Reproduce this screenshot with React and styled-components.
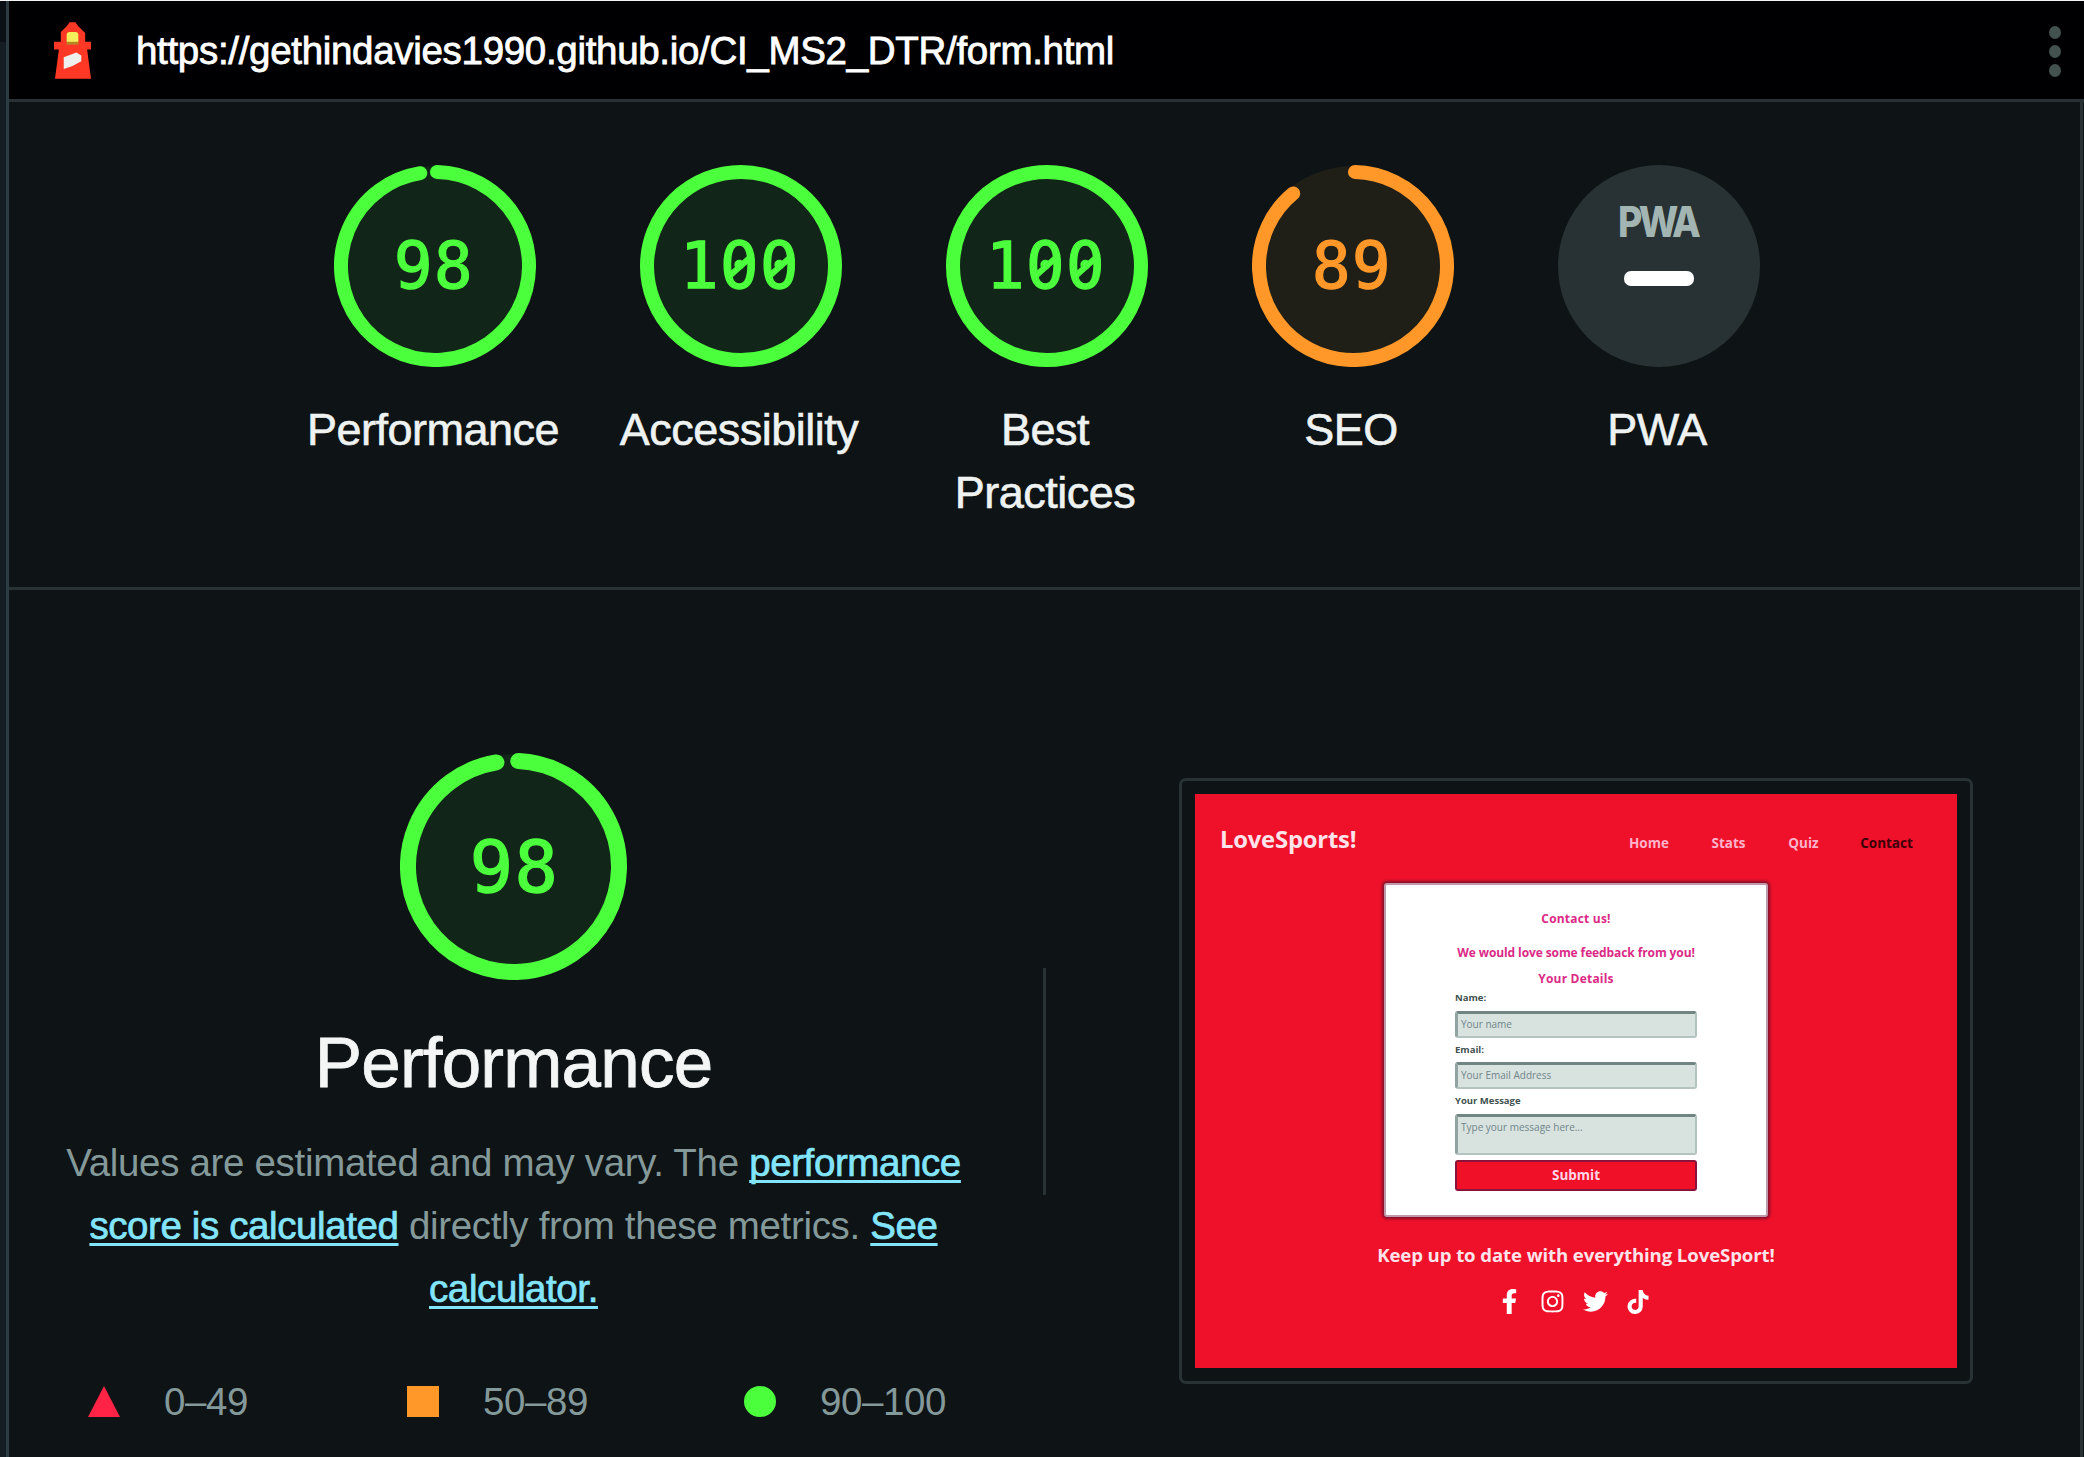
import React from 'react';
import styled, { createGlobalStyle } from 'styled-components';
import { FaFacebookF, FaInstagram, FaTwitter, FaTiktok } from 'react-icons/fa';

const GREEN = '#4cff3d';
const ORANGE = '#ff9829';
const RED = '#ff2345';
const LINE = '#283234';

const GlobalStyle = createGlobalStyle`
  * { box-sizing: border-box; }
  body {
    margin: 0;
    background: #0e1315;
    font-family: "Liberation Sans", Arial, sans-serif;
    overflow: hidden;
  }
`;

const Page = styled.div`
  display: flex;
  width: 2084px;
  height: 1457px;
  border-top: 1px solid #f4f6f6;
  background: #0e1315;
`;

const Gutter = styled.div`
  width: 9px;
  flex: none;
  border-right: 3px solid #2d3b43;
  background: linear-gradient(#0b0f16 41px, #141c24 41px);
`;

const Report = styled.main`
  flex: 1;
  display: flex;
  flex-direction: column;
  min-width: 0;
`;

const TopBar = styled.header`
  display: flex;
  align-items: center;
  height: 101px;
  flex: none;
  padding: 2px 23px 0 45px;
  border-bottom: 3px solid ${LINE};
  background: #000002;
`;

const Url = styled.span`
  flex: 1;
  margin-left: 44px;
  font-size: 38.5px;
  letter-spacing: -0.31px;
  color: #fff;
  white-space: nowrap;
  -webkit-text-stroke: 0.8px #fff;
`;

const Menu = styled.div`
  display: flex;
  flex-direction: column;
  gap: 6px;
`;

const MenuDot = styled.i`
  width: 12px;
  height: 13px;
  border-radius: 50%;
  background: #43514f;
`;

const Body = styled.div`
  flex: 1;
  border-right: 3px solid ${LINE};
  margin-right: 1px;
`;

const Scores = styled.section`
  display: flex;
  height: 488px;
  padding: 63px 0 0 273px;
  border-bottom: 3px solid ${LINE};
`;

const ScoreItem = styled.div`
  width: 306px;
  flex: none;
  display: flex;
  flex-direction: column;
  align-items: center;
`;

const ScoreLabel = styled.div`
  margin-top: 31px;
  margin-right: 4px;
  font-size: 45px;
  line-height: 63px;
  letter-spacing: -0.5px;
  text-align: center;
  color: #eef3f2;
  -webkit-text-stroke: 0.6px #eef3f2;
`;

const GaugeBox = styled.div`
  display: grid;
  place-items: center;
  width: ${(p) => p.$size}px;
  height: ${(p) => p.$size}px;
  > * { grid-area: 1 / 1; }
`;

const GaugeValue = styled.span`
  font-family: "DejaVu Sans Mono", monospace;
  font-size: ${(p) => p.$font}px;
  line-height: 1;
  letter-spacing: 1.4px;
  margin-right: ${(p) => p.$shift}px;
  color: ${(p) => p.$color};
  -webkit-text-stroke: 1.4px ${(p) => p.$color};
`;

const Zero = styled.span`
  position: relative;
  &::after {
    content: "";
    position: absolute;
    left: 6px;
    top: 50%;
    width: 27px;
    height: 6px;
    margin-top: -2px;
    background: currentColor;
    transform: rotate(-42deg);
  }
`;

const PwaDisc = styled.div`
  width: 202px;
  height: 202px;
  border-radius: 50%;
  background: #283234;
  display: flex;
  flex-direction: column;
  align-items: center;
  padding-top: 35px;
`;

const PwaMark = styled.span`
  margin-right: 2px;
  font-family: "Inter", sans-serif;
  font-weight: 800;
  font-size: 43px;
  line-height: 42px;
  letter-spacing: -4px;
  color: #a2b5b3;
  transform: scaleX(0.87);
`;

const PwaDash = styled.i`
  width: 70px;
  height: 15px;
  margin-top: 29px;
  margin-right: 1px;
  border-radius: 7px;
  background: #fff;
`;

const Detail = styled.section`
  display: flex;
  align-items: flex-start;
`;

const Summary = styled.div`
  width: 1009px;
  flex: none;
  padding-top: 163px;
  display: flex;
  flex-direction: column;
  align-items: center;
`;

const Title = styled.h1`
  margin: 38px 0 23px;
  font-size: 71px;
  font-weight: 400;
  line-height: 90px;
  letter-spacing: -0.8px;
  color: #f3f6f5;
  -webkit-text-stroke: 0.8px #f3f6f5;
`;

const Description = styled.p`
  margin: 0;
  text-align: center;
  font-size: 38.5px;
  line-height: 63px;
  letter-spacing: -0.32px;
  white-space: nowrap;
  color: #84999a;
`;

const Link = styled.a`
  color: #83e5fb;
  letter-spacing: -0.4px;
  text-decoration: underline;
  text-decoration-thickness: 3px;
  text-underline-offset: 4px;
  text-decoration-skip-ink: none;
  -webkit-text-stroke: 0.7px #83e5fb;
`;

const Legend = styled.div`
  align-self: stretch;
  display: grid;
  grid-template-columns: 319px 337px auto;
  margin-top: 50px;
  padding-left: 79px;
`;

const LegendItem = styled.div`
  display: flex;
  align-items: center;
  gap: 44px;
  font-size: 38.5px;
  line-height: 63px;
  letter-spacing: -0.4px;
  color: #84999a;
`;

const Marker = styled.i`
  width: 32px;
  height: 31px;
  background: ${(p) => p.$color};
  border-radius: ${(p) => (p.$shape === 'circle' ? '50%' : 0)};
  clip-path: ${(p) => (p.$shape === 'triangle' ? 'polygon(50% 0, 100% 100%, 0 100%)' : 'none')};
`;

const Divider = styled.div`
  width: 3px;
  height: 227px;
  margin: 378px 133px 0 25px;
  background: ${LINE};
`;

const Frame = styled.div`
  width: 794px;
  height: 606px;
  margin-top: 188px;
  padding: 13px;
  border: 3px solid ${LINE};
  border-radius: 7px;
`;

const Site = styled.div`
  display: flex;
  flex-direction: column;
  align-items: center;
  height: 574px;
  background: #ee1129;
  font-family: "Open Sans", "Noto Sans", sans-serif;
  color: #ffe3ea;
`;

const SiteNav = styled.nav`
  align-self: stretch;
  display: flex;
  align-items: center;
  gap: 40px;
  height: 89px;
  padding: 4px 43px 0 25px;
  font-size: 13.5px;
  font-weight: 700;
`;

const Brand = styled.span`
  flex: 1;
  font-size: 23.8px;
  font-weight: 700;
  letter-spacing: -0.2px;
  margin-bottom: 4px;
`;

const NavItem = styled.span`
  width: ${(p) => p.$width}px;
  display: flex;
  justify-content: center;
  padding-top: 4px;
  color: ${(p) => (p.$active ? '#3d0008' : '#ffb3cc')};
`;

const Card = styled.div`
  width: 384px;
  height: 334px;
  padding: 25px 69px 0;
  background: #fff;
  border: 2px solid #c09aaa;
  border-radius: 3px;
  box-shadow: 0 0 3px 2px #84102c;
  text-align: center;
  color: #db2a86;
  font-weight: 700;
`;

const CardLine = styled.div`
  margin: 0 -20px;
  height: ${(p) => p.$height}px;
  line-height: 18px;
  font-size: 12px;
  letter-spacing: ${(p) => p.$spacing || 0}px;
  white-space: nowrap;
`;

const FieldLabel = styled.div`
  height: ${(p) => p.$height}px;
  line-height: 13px;
  font-size: 9.5px;
  text-align: left;
  color: #40514f;
`;

const Field = styled.div`
  height: ${(p) => p.$height}px;
  margin-bottom: ${(p) => p.$after}px;
  padding: 2px 3px;
  border: 2px solid #b3c3c0;
  border-top: 3px solid #718583;
  border-left: 3px solid #91a4a2;
  border-radius: 3px;
  background: #d8e2df;
  font-size: 10px;
  font-weight: 400;
  line-height: 16px;
  text-align: left;
  color: #71868a;
`;

const Submit = styled.div`
  height: 31px;
  border: 2px solid #8b1238;
  border-radius: 3px;
  background: #f01028;
  font-size: 13.5px;
  font-weight: 700;
  line-height: 26px;
  color: #ffd5e6;
`;

const SiteTagline = styled.div`
  margin-top: 24px;
  font-size: 18.6px;
  font-weight: 700;
  line-height: 28px;
  letter-spacing: -0.1px;
  white-space: nowrap;
`;

const Socials = styled.div`
  display: flex;
  align-items: center;
  gap: 18px;
  margin: 20px 6px 0 0;
  color: #fff;
`;

function Arc({ size, stroke, from, to }) {
  const r = (size - stroke) / 2;
  const c = size / 2;
  const point = (deg) => {
    const a = (deg * Math.PI) / 180;
    return `${c + r * Math.sin(a)} ${c - r * Math.cos(a)}`;
  };
  return <path d={`M${point(from)} A${r} ${r} 0 1 1 ${point(to)}`} />;
}

function Gauge({ value, size = 202, stroke = 14, font = 64, shift = 2, color = GREEN, fill = '#112518', from, to }) {
  const c = size / 2;
  return (
    <GaugeBox $size={size}>
      <svg width={size} height={size} fill="none" stroke={color} strokeWidth={stroke} strokeLinecap="round">
        <circle cx={c} cy={c} r={c - 1} fill={fill} stroke="none" />
        {to ? <Arc size={size} stroke={stroke} from={from} to={to} /> : <circle cx={c} cy={c} r={(size - stroke) / 2} />}
      </svg>
      <GaugeValue $font={font} $color={color} $shift={shift}>
        {[...value].map((digit, i) => (digit === '0' ? <Zero key={i}>0</Zero> : digit))}
      </GaugeValue>
    </GaugeBox>
  );
}

function Lighthouse() {
  return (
    <svg width="38" height="58" viewBox="0 0 39 59">
      <path d="M13 4 L16 0 H22 L25 4 L32 11 V20 H38 V28 H34 L38 58 H1 L5 28 H0 V20 H7 V10 Z" fill="#ff3825" />
      <rect x="13" y="10" width="12" height="12" rx="3" fill="#f4ef5a" />
      <path d="M13 20 H25 V23 H13 Z" fill="#b78627" />
      <path d="M10 36 L23 31 L28 34 V40 L19 45 L10 48 Z" fill="#efefed" />
    </svg>
  );
}

export default function App() {
  return (
    <Page>
      <GlobalStyle />
      <Gutter />
      <Report>
        <TopBar>
          <Lighthouse />
          <Url>https://gethindavies1990.github.io/CI_MS2_DTR/form.html</Url>
          <Menu><MenuDot /><MenuDot /><MenuDot /></Menu>
        </TopBar>
        <Body>
          <Scores>
            <ScoreItem>
              <Gauge value="98" from={1.2} to={351} />
              <ScoreLabel>Performance</ScoreLabel>
            </ScoreItem>
            <ScoreItem>
              <Gauge value="100" />
              <ScoreLabel>Accessibility</ScoreLabel>
            </ScoreItem>
            <ScoreItem>
              <Gauge value="100" />
              <ScoreLabel>Best<br />Practices</ScoreLabel>
            </ScoreItem>
            <ScoreItem>
              <Gauge value="89" color={ORANGE} fill="#1f1e17" from={1.2} to={320.5} />
              <ScoreLabel>SEO</ScoreLabel>
            </ScoreItem>
            <ScoreItem>
              <PwaDisc>
                <PwaMark>PWA</PwaMark>
                <PwaDash />
              </PwaDisc>
              <ScoreLabel>PWA</ScoreLabel>
            </ScoreItem>
          </Scores>
          <Detail>
            <Summary>
              <Gauge value="98" size={227} stroke={16} font={72} shift={-2} from={2.6} to={350.7} />
              <Title>Performance</Title>
              <Description>
                Values are estimated and may vary. The <Link>performance</Link><br />
                <Link>score is calculated</Link> directly from these metrics. <Link>See</Link><br />
                <Link>calculator.</Link>
              </Description>
              <Legend>
                <LegendItem><Marker $shape="triangle" $color={RED} />0–49</LegendItem>
                <LegendItem><Marker $shape="square" $color={ORANGE} />50–89</LegendItem>
                <LegendItem><Marker $shape="circle" $color={GREEN} />90–100</LegendItem>
              </Legend>
            </Summary>
            <Divider />
            <Frame>
              <Site>
                <SiteNav>
                  <Brand>LoveSports!</Brand>
                  <NavItem $width={40}>Home</NavItem>
                  <NavItem $width={39}>Stats</NavItem>
                  <NavItem $width={31}>Quiz</NavItem>
                  <NavItem $width={55} $active>Contact</NavItem>
                </SiteNav>
                <Card>
                  <CardLine $height={34} $spacing={0.2}>Contact us!</CardLine>
                  <CardLine $height={26} $spacing={-0.1}>We would love some feedback from you!</CardLine>
                  <CardLine $height={21} $spacing={0.2}>Your Details</CardLine>
                  <FieldLabel $height={20}>Name:</FieldLabel>
                  <Field $height={27} $after={5}>Your name</Field>
                  <FieldLabel $height={19}>Email:</FieldLabel>
                  <Field $height={27} $after={5}>Your Email Address</Field>
                  <FieldLabel $height={20}>Your Message</FieldLabel>
                  <Field $height={41} $after={5}>Type your message here...</Field>
                  <Submit>Submit</Submit>
                </Card>
                <SiteTagline>Keep up to date with everything LoveSport!</SiteTagline>
                <Socials>
                  <FaFacebookF size={25} />
                  <FaInstagram size={25} />
                  <FaTwitter size={25} />
                  <FaTiktok size={24} />
                </Socials>
              </Site>
            </Frame>
          </Detail>
        </Body>
      </Report>
    </Page>
  );
}
